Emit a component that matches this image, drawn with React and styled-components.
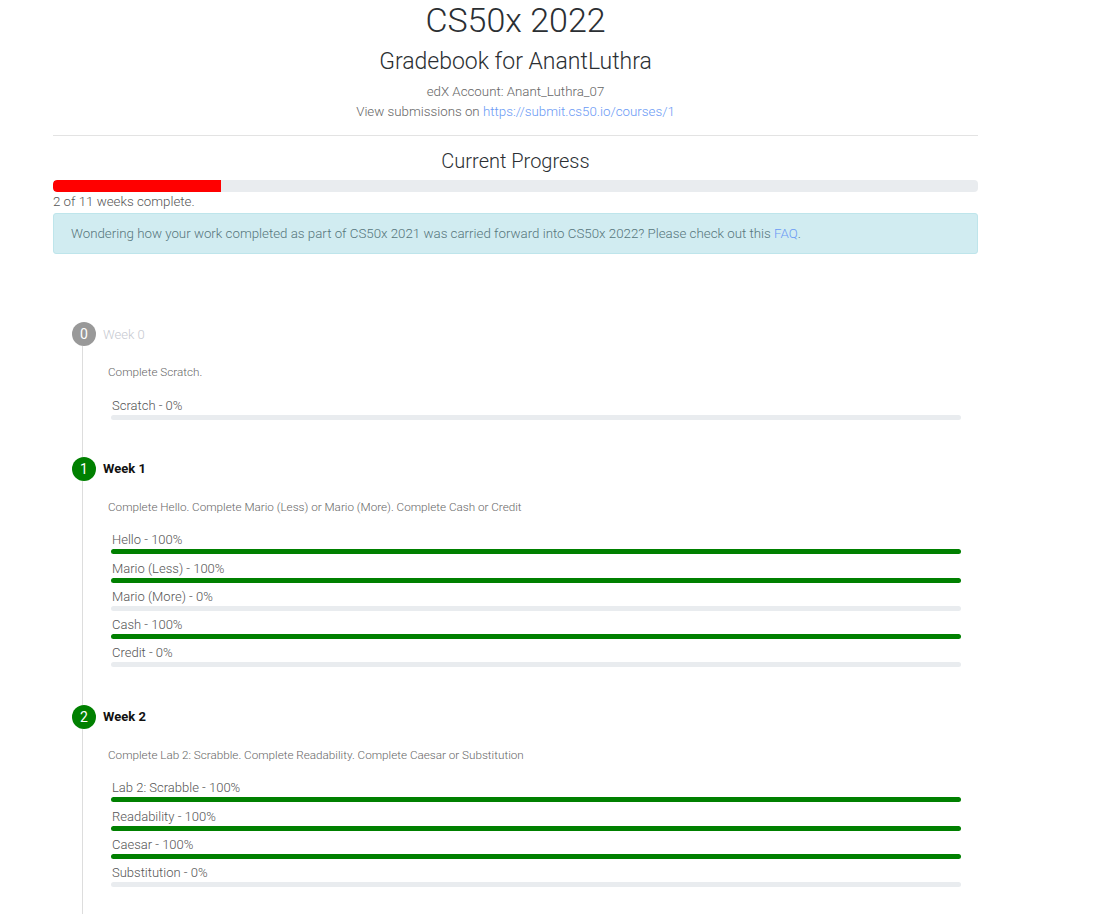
import { createGlobalStyle } from "styled-components";
import styled from "styled-components";

const GlobalStyle = createGlobalStyle`
  body {
    margin: 0;
    background: #fff;
    font-family: Roboto, "Liberation Sans", sans-serif;
    font-weight: 300;
    color: #2b2f33;
  }
`;

const Page = styled.div`
  width: 925px;
  margin-left: 53px;
`;

const Header = styled.header`
  text-align: center;
`;

const Title = styled.h1`
  margin: 0;
  font-size: 34px;
  line-height: 40px;
  font-weight: 300;
`;

const Subtitle = styled.h2`
  margin: 7px 0 0;
  font-size: 23px;
  line-height: 29px;
  font-weight: 300;
`;

const Meta = styled.div`
  font-size: 13.3px;
  line-height: 20px;
  color: #666;
  margin-top: ${(p) => p.$top || 0}px;
`;

const Link = styled.a`
  color: #6a9af5;
  text-decoration: none;
`;

const Rule = styled.hr`
  margin: 13px 0 0;
  border: 0;
  border-top: 1px solid #e3e3e3;
`;

const SectionTitle = styled.h3`
  margin: 13px 0 0;
  text-align: center;
  font-size: 20px;
  line-height: 24px;
  font-weight: 300;
`;

const ProgressTrack = styled.div`
  margin-top: 7px;
  height: 12px;
  background: #e9ecef;
  border-radius: 4px;
  overflow: hidden;
`;

const ProgressFill = styled.div`
  height: 100%;
  background: #ff0000;
  border-radius: 4px 0 0 4px;
`;

const ProgressText = styled.div`
  font-size: 13.3px;
  line-height: 20px;
  color: #555;
`;

const Alert = styled.div`
  margin-top: 1px;
  padding: 11px 17px;
  font-size: 13.3px;
  line-height: 17px;
  color: #56767c;
  background: #d1ecf1;
  border: 1px solid #bee5eb;
  border-radius: 3px;
`;

const Timeline = styled.div`
  margin-top: 68px;
  padding-left: 19px;
`;

const Week = styled.section``;

const WeekHead = styled.div`
  display: flex;
  align-items: center;
  gap: 7px;
  height: 24px;
`;

const Badge = styled.span`
  width: 24px;
  height: 24px;
  border-radius: 50%;
  background: ${(p) => (p.$done ? "#008000" : "#999")};
  color: #fff;
  font-size: 14px;
  font-weight: 400;
  display: flex;
  align-items: center;
  justify-content: center;
`;

const WeekTitle = styled.span`
  font-size: 13px;
  font-weight: ${(p) => (p.$done ? 700 : 300)};
  color: ${(p) => (p.$done ? "#111" : "#c6c9d0")};
`;

const WeekBody = styled.div`
  margin-left: 10px;
  border-left: 1px solid #ddd;
  padding: 18px 0 33px 25px;
`;

const Description = styled.div`
  font-size: 11.7px;
  line-height: 16px;
  color: #666;
`;

const Items = styled.div`
  margin: 15.5px 0 0 3px;
  width: 850px;
`;

const Item = styled.div`
  margin-bottom: 4.3px;
`;

const ItemLabel = styled.div`
  font-size: 13px;
  line-height: 19px;
  color: #555;
  padding-left: 1px;
`;

const ItemBar = styled.div`
  height: 5px;
  border-radius: 3px;
  background: ${(p) => (p.$full ? "#008000" : "#e9ecef")};
`;

const weeks = [
  {
    n: 0,
    done: false,
    desc: "Complete Scratch.",
    items: [["Scratch", 0]],
  },
  {
    n: 1,
    done: true,
    desc: "Complete Hello. Complete Mario (Less) or Mario (More). Complete Cash or Credit",
    items: [
      ["Hello", 100],
      ["Mario (Less)", 100],
      ["Mario (More)", 0],
      ["Cash", 100],
      ["Credit", 0],
    ],
  },
  {
    n: 2,
    done: true,
    desc: "Complete Lab 2: Scrabble. Complete Readability. Complete Caesar or Substitution",
    items: [
      ["Lab 2: Scrabble", 100],
      ["Readability", 100],
      ["Caesar", 100],
      ["Substitution", 0],
    ],
  },
];

export default function App() {
  return (
    <Page>
      <GlobalStyle />
      <Header>
        <Title>CS50x 2022</Title>
        <Subtitle>Gradebook for AnantLuthra</Subtitle>
        <Meta $top={6}>edX Account: Anant_Luthra_07</Meta>
        <Meta>
          View submissions on <Link href="#">https://submit.cs50.io/courses/1</Link>
        </Meta>
      </Header>
      <Rule />
      <SectionTitle>Current Progress</SectionTitle>
      <ProgressTrack>
        <ProgressFill style={{ width: `${(2 / 11) * 100}%` }} />
      </ProgressTrack>
      <ProgressText>2 of 11 weeks complete.</ProgressText>
      <Alert>
        Wondering how your work completed as part of CS50x 2021 was carried forward into CS50x
        2022? Please check out this <Link href="#">FAQ</Link>.
      </Alert>

      <Timeline>
        {weeks.map((w) => (
          <Week key={w.n}>
            <WeekHead>
              <Badge $done={w.done}>{w.n}</Badge>
              <WeekTitle $done={w.done}>Week {w.n}</WeekTitle>
            </WeekHead>
            <WeekBody>
              <Description>{w.desc}</Description>
              <Items>
                {w.items.map(([name, pct]) => (
                  <Item key={name}>
                    <ItemLabel>
                      {name} - {pct}%
                    </ItemLabel>
                    <ItemBar $full={pct === 100} />
                  </Item>
                ))}
              </Items>
            </WeekBody>
          </Week>
        ))}
      </Timeline>
    </Page>
  );
}
